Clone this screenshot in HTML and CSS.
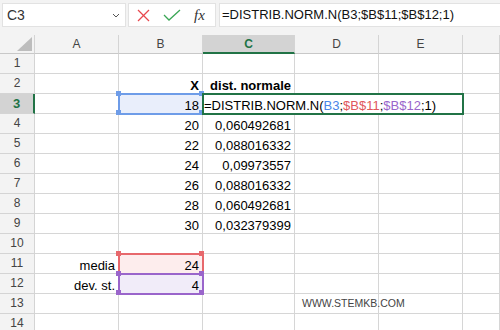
FILE: index.html
```html
<!DOCTYPE html>
<html>
<head>
<meta charset="utf-8">
<link rel="stylesheet" href="styles.css">
</head>
<body>
<div class="toolbar">
  <div class="namebox">
    <span>C3</span>
    <svg class="chev" width="8" height="5" viewBox="0 0 8 5"><polyline points="1,1 4,4 7,1" fill="none" stroke="#555" stroke-width="1"/></svg>
  </div>
  <div class="btns">
    <svg class="ico-x" width="13" height="13" viewBox="0 0 13 13"><line x1="1" y1="1" x2="12" y2="12" stroke="#e8484e" stroke-width="1.2"/><line x1="12" y1="1" x2="1" y2="12" stroke="#e8484e" stroke-width="1.2"/></svg>
    <svg class="ico-ok" width="18" height="12" viewBox="0 0 18 12"><polyline points="1,6 6,11 17,1" fill="none" stroke="#3aa655" stroke-width="1.3"/></svg>
    <span class="fx">fx</span>
  </div>
  <div class="formula">=DISTRIB.NORM.N(B3;$B$11;$B$12;1)</div>
</div>
<div class="grid">
  <div class="corner"><svg width="15" height="14" viewBox="0 0 15 14"><polygon points="15,0 15,14 0,14" fill="#bdbdbd"/></svg></div>
  <div class="hd">A</div><div class="hd">B</div><div class="hd sel">C</div><div class="hd">D</div><div class="hd">E</div><div class="hd"></div>

  <div class="rh">1</div><div class="c"></div><div class="c"></div><div class="c"></div><div class="c"></div><div class="c"></div><div class="c"></div>

  <div class="rh">2</div><div class="c"></div><div class="c b">X</div><div class="c b">dist. normale</div><div class="c"></div><div class="c"></div><div class="c"></div>

  <div class="rh sel">3</div><div class="c"></div>
  <div class="c rng blue">18<span class="h tl"></span><span class="h tr"></span><span class="h bl"></span><span class="h br"></span></div>
  <div class="c edit">=DISTRIB.NORM.N(<span class="r1">B3</span>;<span class="r2">$B$11</span>;<span class="r3">$B$12</span>;1)</div>
  <div class="c"></div>

  <div class="rh">4</div><div class="c"></div><div class="c">20</div><div class="c">0,060492681</div><div class="c"></div><div class="c"></div><div class="c"></div>
  <div class="rh">5</div><div class="c"></div><div class="c">22</div><div class="c">0,088016332</div><div class="c"></div><div class="c"></div><div class="c"></div>
  <div class="rh">6</div><div class="c"></div><div class="c">24</div><div class="c">0,09973557</div><div class="c"></div><div class="c"></div><div class="c"></div>
  <div class="rh">7</div><div class="c"></div><div class="c">26</div><div class="c">0,088016332</div><div class="c"></div><div class="c"></div><div class="c"></div>
  <div class="rh">8</div><div class="c"></div><div class="c">28</div><div class="c">0,060492681</div><div class="c"></div><div class="c"></div><div class="c"></div>
  <div class="rh">9</div><div class="c"></div><div class="c">30</div><div class="c">0,032379399</div><div class="c"></div><div class="c"></div><div class="c"></div>
  <div class="rh">10</div><div class="c"></div><div class="c"></div><div class="c"></div><div class="c"></div><div class="c"></div><div class="c"></div>

  <div class="rh">11</div><div class="c">media</div>
  <div class="c rng red">24<span class="h tl"></span><span class="h tr"></span></div>
  <div class="c"></div><div class="c"></div><div class="c"></div><div class="c"></div>

  <div class="rh">12</div><div class="c">dev. st.</div>
  <div class="c rng purple">4<span class="h tl"></span><span class="h tr"></span><span class="h bl"></span><span class="h br"></span></div>
  <div class="c"></div><div class="c"></div><div class="c"></div><div class="c"></div>

  <div class="rh">13</div><div class="c"></div><div class="c"></div><div class="c"></div><div class="c site">WWW.STEMKB.COM</div><div class="c"></div><div class="c"></div>
  <div class="rh">14</div><div class="c"></div><div class="c"></div><div class="c"></div><div class="c"></div><div class="c"></div><div class="c"></div>
</div>
</body>
</html>
```
FILE: styles.css
```css
* { box-sizing: border-box; }
body {
  margin: 0;
  width: 500px;
  height: 330px;
  overflow: hidden;
  background: #fff;
  font-family: "Liberation Sans", Arial, sans-serif;
  color: #000;
}
.toolbar {
  height: 35px;
  background: #f3f3f3;
  display: flex;
  align-items: flex-start;
  padding: 3px 0 0 2px;
}
.namebox {
  width: 124px;
  height: 24px;
  background: #fff;
  border: 1px solid #e2e2e2;
  display: flex;
  align-items: center;
  justify-content: space-between;
  padding: 0 5px 0 4px;
  font-size: 14px;
  color: #333;
}
.btns {
  width: 88px;
  height: 24px;
  margin-left: 2px;
  background: #fff;
  border: 1px solid #e2e2e2;
  display: flex;
  align-items: center;
  padding-left: 8px;
}
.ico-ok { margin-left: 13px; }
.fx {
  margin-left: 13px;
  font-family: "Liberation Serif", serif;
  font-style: italic;
  font-size: 15px;
  color: #333;
}
.formula {
  flex: 1;
  height: 24px;
  margin-left: 3px;
  background: #fff;
  border: 1px solid #e2e2e2;
  border-right: none;
  padding-left: 2px;
  font-size: 13px;
  line-height: 22px;
  color: #111;
  white-space: nowrap;
}
.grid {
  display: grid;
  grid-template-columns: 35px 84px 84px 92px 84px 84px 1fr;
  grid-template-rows: 19px repeat(14, 20px);
}
.corner {
  background: #f3f3f3;
  border-right: 1px solid #d4d4d4;
  border-bottom: 1px solid #c8c8c8;
  display: flex;
  justify-content: flex-end;
  align-items: flex-end;
  padding: 0 2px 2px 0;
}
.hd {
  background: #f3f3f3;
  border-right: 1px solid #d4d4d4;
  border-bottom: 1px solid #c8c8c8;
  text-align: center;
  font-size: 12px;
  line-height: 19px;
  color: #444;
}
.hd.sel {
  background: #d3d3d3;
  border-bottom: 2px solid #217346;
  color: #217346;
  font-weight: bold;
}
.rh {
  background: #f3f3f3;
  border-right: 1px solid #d4d4d4;
  border-bottom: 1px solid #d4d4d4;
  text-align: center;
  font-size: 12px;
  line-height: 19px;
  color: #444;
}
.rh.sel {
  background: #d3d3d3;
  border-right: 2px solid #217346;
  color: #217346;
  font-weight: bold;
  font-size: 13px;
}
.c {
  border-right: 1px solid #d6d6d6;
  border-bottom: 1px solid #d6d6d6;
  font-size: 13px;
  line-height: 19px;
  padding: 2px 3px 0;
  white-space: nowrap;
  text-align: right;
}
.c.b { font-weight: bold; }
.rng {
  position: relative;
  outline-width: 2px;
  outline-style: solid;
  outline-offset: -1px;
  z-index: 1;
}
.rng.blue { outline-color: #6e9ce8; background: #e9eefb; }
.rng.red { outline-color: #e7686c; background: #fdeded; }
.rng.purple { outline-color: #9a65cb; background: #f1ecf9; z-index: 2; }
.h {
  position: absolute;
  width: 5px;
  height: 5px;
}
.blue .h { background: #6e9ce8; }
.red .h { background: #e7686c; }
.purple .h { background: #9a65cb; }
.h.tl { left: -3px; top: -3px; }
.h.tr { right: -2px; top: -3px; }
.h.bl { left: -3px; bottom: -2px; }
.h.br { right: -2px; bottom: -2px; }
.edit {
  grid-column: span 3;
  position: relative;
  z-index: 3;
  background: #fff;
  outline: 2px solid #217346;
  outline-offset: -1px;
  text-align: left;
  padding-left: 1px;
}
.r1 { color: #4a86e8; }
.r2 { color: #e0575c; }
.r3 { color: #9a65cb; }
.c.site {
  text-align: left;
  padding: 0 0 0 7px;
  font-size: 10.5px;
  color: #444;
  overflow: visible;
}
```
